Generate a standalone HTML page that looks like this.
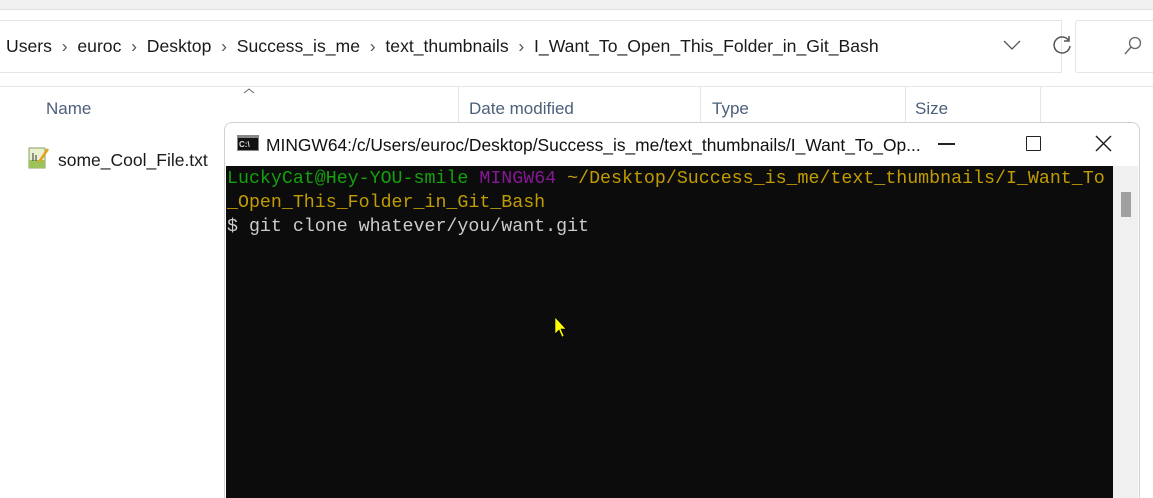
<!DOCTYPE html>
<html style="overflow:hidden;height:498px"><head><style>
body{margin:0;width:1153px;height:498px;overflow:hidden;background:#fff;font-family:"Liberation Sans",sans-serif;position:relative}
.a{position:absolute}
.mono{font-family:"Liberation Mono",monospace;font-size:18.3px;line-height:24px;white-space:pre}
</style></head><body>
<div class="a" style="left:0;top:0;width:1153px;height:9px;background:#f0f0f0;border-bottom:1px solid #e0e0e0"></div>
<div class="a" style="left:-2px;top:20px;width:1063px;height:51px;border:1px solid #e5e5e5;border-left:none"></div>
<div class="a" style="left:1075px;top:20px;width:90px;height:51px;border:1px solid #e5e5e5;border-radius:3px"></div>
<div class="a" style="left:6px;top:36px;font-size:17.6px;color:#1a1a1a;white-space:pre">Users  <span style="color:#555">›</span>  euroc  <span style="color:#555">›</span>  Desktop  <span style="color:#555">›</span>  Success_is_me  <span style="color:#555">›</span>  text_thumbnails  <span style="color:#555">›</span>  I_Want_To_Open_This_Folder_in_Git_Bash</div>
<svg class="a" style="left:1002px;top:38px" width="20" height="14"><path d="M2 3 L10 11 L18 3" stroke="#555" stroke-width="1.3" fill="none"/></svg>
<svg class="a" style="left:1052px;top:33px" width="22" height="22"><path d="M17 8 A8 8 0 1 0 18 13" stroke="#555" stroke-width="1.5" fill="none"/><path d="M17 3 L17 8 L12 8" stroke="#555" stroke-width="1.5" fill="none"/></svg>
<svg class="a" style="left:1122px;top:35px" width="22" height="22"><circle cx="13" cy="8" r="5.5" stroke="#666" stroke-width="1.3" fill="none"/><path d="M9 12 L3 19" stroke="#666" stroke-width="1.4"/></svg>
<div class="a" style="left:0;top:86px;width:1153px;height:1px;background:#e5e5e5"></div>
<svg class="a" style="left:242px;top:87px" width="14" height="8"><path d="M2 6 L7 2 L12 6" stroke="#666" fill="none"/></svg>
<div class="a" style="left:458px;top:87px;width:1px;height:35px;background:#e5e5e5"></div>
<div class="a" style="left:700px;top:87px;width:1px;height:35px;background:#e5e5e5"></div>
<div class="a" style="left:905px;top:87px;width:1px;height:35px;background:#e5e5e5"></div>
<div class="a" style="left:1040px;top:87px;width:1px;height:35px;background:#e5e5e5"></div>
<div class="a" style="left:46px;top:99px;font-size:17px;color:#4c607a">Name</div>
<div class="a" style="left:469px;top:99px;font-size:17px;color:#4c607a">Date modified</div>
<div class="a" style="left:712px;top:99px;font-size:17px;color:#4c607a">Type</div>
<div class="a" style="left:915px;top:99px;font-size:17px;color:#4c607a">Size</div>
<svg class="a" style="left:27px;top:145px" width="24" height="26"><rect x="2" y="3" width="16" height="20" fill="#e8f0d0" stroke="#8aa060"/><rect x="2" y="15" width="16" height="8" fill="#9cc35a"/><path d="M6 8v8M9 10v6" stroke="#333"/><path d="M12 17 L21 4" stroke="#e0a020" stroke-width="2.5"/></svg>
<div class="a" style="left:58px;top:150px;font-size:17.5px;color:#1a1a1a">some_Cool_File.txt</div>
<div class="a" style="left:224px;top:122px;width:914px;height:380px;background:#fff;border:1px solid #d0d0d0;border-radius:8px"></div>
<svg class="a" style="left:237px;top:135px" width="22" height="16"><rect x="0" y="0" width="22" height="16" fill="#888"/><rect x="1" y="3" width="20" height="12" fill="#111"/><text x="2" y="12" font-size="8" fill="#ddd" font-family="Liberation Sans" font-weight="bold">C:\</text></svg>
<div class="a" style="left:266px;top:135px;font-size:17.4px;color:#111">MINGW64:/c/Users/euroc/Desktop/Success_is_me/text_thumbnails/I_Want_To_Op...</div>
<div class="a" style="left:938px;top:143px;width:17px;height:1.5px;background:#222"></div>
<div class="a" style="left:1026px;top:136px;width:13px;height:13px;border:1.5px solid #222;border-radius:1px"></div>
<svg class="a" style="left:1094px;top:134px" width="20" height="20"><path d="M2 2 L17 17 M17 2 L2 17" stroke="#222" stroke-width="1.5"/></svg>
<div class="a" style="left:226px;top:166px;width:887px;height:332px;background:#0c0c0c"></div>
<div class="a" style="left:1113px;top:166px;width:25px;height:332px;background:#f0f0f0"></div>
<div class="a" style="left:1121px;top:192px;width:10px;height:25px;background:#a0a0a0"></div>
<div class="a mono" style="left:227px;top:167px;color:#ccc"><span style="color:#13a10e">LuckyCat@Hey-YOU-smile</span> <span style="color:#881798">MINGW64</span> <span style="color:#c19c00">~/Desktop/Success_is_me/text_thumbnails/I_Want_To</span>
<span style="color:#c19c00">_Open_This_Folder_in_Git_Bash</span>
$ git clone whatever/you/want.git</div>
<svg class="a" style="left:554px;top:316px" width="14" height="22"><path d="M1 1 L1 18 L5 14 L8 21 L10 20 L7 13 L12 13 Z" fill="#ffff00" stroke="#000" stroke-width="0.6"/></svg>
</body></html>
